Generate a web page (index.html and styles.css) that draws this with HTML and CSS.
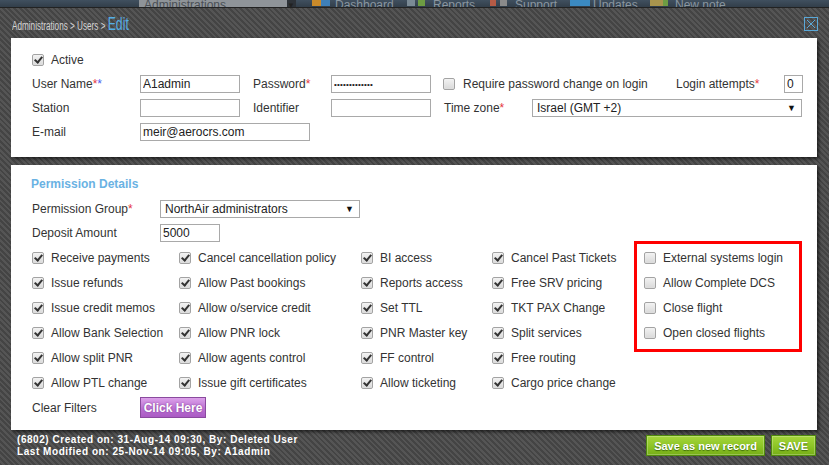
FILE: index.html
```html
<!DOCTYPE html>
<html lang="en">
<head>
  <meta charset="UTF-8" />
  <title>Users - Edit</title>
  <link rel="stylesheet" href="styles.css">
</head>
<body>

  <div class="topbar">
    <div class="top-select">Administrations<span>&#9660;</span></div>
    <span class="top-ico ico-dash"></span><span class="top-link l-dash">Dashboard</span>
    <span class="top-ico ico-rep"></span><span class="top-link l-rep">Reports</span>
    <span class="top-ico ico-sup"></span><span class="top-link l-sup">Support</span>
    <span class="top-ico ico-upd"></span><span class="top-link l-upd">Updates</span>
    <span class="top-ico ico-note"></span><span class="top-link l-note">New note</span>
  </div>

  <div class="dialog-head">
    <div class="crumbs">Administrations &gt; Users &gt; <b>Edit</b></div>
    <div class="close-btn">
      <svg width="14" height="14" viewBox="0 0 14 14">
        <rect x="0.5" y="0.5" width="13" height="13" fill="none" stroke="#5aa8d8" />
        <path d="M3 3 L11 11 M11 3 L3 11" stroke="#5aa8d8" stroke-width="1" />
      </svg>
    </div>
  </div>

  <div class="panel panel-user">
    <div class="row row-active">
      <span class="chk on"></span><span>Active</span>
    </div>
    <div class="row">
      <label class="lbl">User Name<em>*</em><em class="blue">*</em></label>
      <input class="inp w100" type="text" value="A1admin">
      <label class="lbl lbl-mid">Password<em>*</em></label>
      <input class="inp w100 pwd" type="password" value="aaaaaaaaaaaaa">
      <span class="chk"></span><span class="lbl-req">Require password change on login</span>
      <label class="lbl">Login attempts<em>*</em></label>
      <input class="inp w19" type="text" value="0">
    </div>
    <div class="row">
      <label class="lbl">Station</label>
      <input class="inp w100" type="text">
      <label class="lbl lbl-mid">Identifier</label>
      <input class="inp w100" type="text">
      <label class="lbl lbl-tz">Time zone<em>*</em></label>
      <div class="sel w270">Israel (GMT +2)</div>
    </div>
    <div class="row">
      <label class="lbl">E-mail</label>
      <input class="inp w170" type="text" value="meir@aerocrs.com">
    </div>
  </div>

  <div class="panel panel-perm">
    <div class="perm-title">Permission Details</div>
    <div class="row">
      <label class="lbl lbl-wide">Permission Group<em>*</em></label>
      <div class="sel w200">NorthAir administrators</div>
    </div>
    <div class="row">
      <label class="lbl lbl-wide">Deposit Amount</label>
      <input class="inp w60" type="text" value="5000">
    </div>

    <div class="perm-grid">
      <div class="perm"><span class="chk on"></span>Receive payments</div>
      <div class="perm"><span class="chk on"></span>Cancel cancellation policy</div>
      <div class="perm"><span class="chk on"></span>BI access</div>
      <div class="perm"><span class="chk on"></span>Cancel Past Tickets</div>
      <div class="perm"><span class="chk"></span>External systems login</div>

      <div class="perm"><span class="chk on"></span>Issue refunds</div>
      <div class="perm"><span class="chk on"></span>Allow Past bookings</div>
      <div class="perm"><span class="chk on"></span>Reports access</div>
      <div class="perm"><span class="chk on"></span>Free SRV pricing</div>
      <div class="perm"><span class="chk"></span>Allow Complete DCS</div>

      <div class="perm"><span class="chk on"></span>Issue credit memos</div>
      <div class="perm"><span class="chk on"></span>Allow o/service credit</div>
      <div class="perm"><span class="chk on"></span>Set TTL</div>
      <div class="perm"><span class="chk on"></span>TKT PAX Change</div>
      <div class="perm"><span class="chk"></span>Close flight</div>

      <div class="perm"><span class="chk on"></span>Allow Bank Selection</div>
      <div class="perm"><span class="chk on"></span>Allow PNR lock</div>
      <div class="perm"><span class="chk on"></span>PNR Master key</div>
      <div class="perm"><span class="chk on"></span>Split services</div>
      <div class="perm"><span class="chk"></span>Open closed flights</div>

      <div class="perm"><span class="chk on"></span>Allow split PNR</div>
      <div class="perm"><span class="chk on"></span>Allow agents control</div>
      <div class="perm"><span class="chk on"></span>FF control</div>
      <div class="perm"><span class="chk on"></span>Free routing</div>
      <div class="perm"></div>

      <div class="perm"><span class="chk on"></span>Allow PTL change</div>
      <div class="perm"><span class="chk on"></span>Issue gift certificates</div>
      <div class="perm"><span class="chk on"></span>Allow ticketing</div>
      <div class="perm"><span class="chk on"></span>Cargo price change</div>
      <div class="perm"></div>

      <div class="mark-box"></div>
    </div>

    <div class="row row-clear">
      <label class="lbl">Clear Filters</label>
      <button class="btn-purple" type="button">Click Here</button>
    </div>
  </div>

  <div class="dialog-foot">
    <div class="foot-info">
      <div>(6802) Created on: 31-Aug-14 09:30, By: Deleted User</div>
      <div>Last Modified on: 25-Nov-14 09:05, By: A1admin</div>
    </div>
    <div class="foot-btns">
      <button class="btn-green" type="button">Save as new record</button>
      <button class="btn-green" type="button">SAVE</button>
    </div>
  </div>

</body>
</html>
```

FILE: styles.css
```css
body {
  margin: 0;
  font-family: 'Liberation Sans', Arial, sans-serif;
  font-size: 12px;
  color: #333;
  background: repeating-linear-gradient(45deg, #444 0, #444 2px, #555 2px, #555 4px);
  height: 465px;
  overflow: hidden;
}

/* dimmed toolbar behind the dialog */
.topbar {
  height: 7px;
  overflow: hidden;
  display: flex;
  align-items: flex-start;
  background: linear-gradient(#40505f, #323e4a);
  border-bottom: 1px solid #222;
  color: #8a96a0;
  font-size: 12px;
  line-height: 11px;
  white-space: nowrap;
}

.top-select {
  box-sizing: border-box;
  width: 157px;
  margin-left: 139px;
  height: 7px;
  background: #8f9499;
  color: #4a4f55;
  padding-left: 5px;
  display: flex;
  justify-content: space-between;
}

.top-select span {
  background: #2d3238;
  color: #222;
  font-size: 8px;
  width: 9px;
}

.top-ico {
  flex: none;
  height: 6px;
}

.top-link {
  flex: none;
}

.ico-dash { width: 18px; margin-left: 16px; background: linear-gradient(90deg, #c98a2a 50%, #3e7fb8 50%); }
.ico-rep { width: 18px; background: linear-gradient(90deg, #7a8a95 45%, transparent 45%, transparent 60%, #6d9c43 60%); }
.ico-sup { width: 17px; background: linear-gradient(90deg, #b55b46 35%, transparent 35%, transparent 60%, #8a8a8a 60%); }
.ico-upd { width: 20px; background: #3b8ac2; }
.ico-note { width: 18px; background: linear-gradient(90deg, #a8944d 70%, #6d9c43 70%); }

.l-dash { width: 72px; margin-left: 5px; }
.l-rep { width: 57px; margin-left: 8px; }
.l-sup { width: 55px; margin-left: 8px; }
.l-upd { width: 57px; margin-left: 3px; }
.l-note { margin-left: 7px; }

.dialog-head {
  height: 30px;
  display: flex;
  align-items: center;
  justify-content: space-between;
  padding: 0 11px 0 12px;
}

.crumbs {
  color: #d4d4d4;
  font-size: 12px;
  transform: scaleX(0.68);
  transform-origin: left center;
  white-space: nowrap;
  margin-top: 2px;
}

.crumbs b {
  color: #55aee6;
  font-weight: normal;
  font-size: 18px;
}

.close-btn {
  height: 14px;
  margin-top: 2px;
}

.panel {
  background: #fff;
  margin: 0 12px 0 11px;
  padding: 0 20px 0 21px;
  box-shadow: 2px 2px 3px rgba(0,0,0,0.55);
}

.panel-user {
  padding-top: 9px;
  padding-bottom: 13px;
}

.panel-perm {
  margin-top: 8px;
  padding-top: 9px;
  padding-bottom: 10px;
}

.row {
  display: flex;
  align-items: center;
  height: 24px;
  white-space: nowrap;
}

.row-active {
  height: 25px;
}

.lbl {
  width: 108px;
  flex: none;
}

.lbl-mid {
  width: 78px;
  margin-left: 13px;
}

.lbl-tz {
  width: 88px;
  margin-left: 13px;
}

.lbl-wide {
  width: 128px;
}

.lbl-req {
  width: 213px;
  flex: none;
}

em {
  font-style: normal;
  color: #e5353d;
}

em.blue {
  color: #4a5ef0;
}

.inp {
  box-sizing: border-box;
  height: 18px;
  border: 1px solid #a9a9a9;
  padding: 0 2px;
  font-family: 'Liberation Sans', Arial, sans-serif;
  font-size: 12px;
  color: #222;
  flex: none;
  outline: none;
}

.pwd {
  font-size: 8px;
  letter-spacing: 0.2px;
}

.w19 { width: 19px; }
.w60 { width: 60px; }
.w100 { width: 100px; }
.w170 { width: 170px; }
.w200 { width: 200px; }
.w270 { width: 270px; }

.sel {
  box-sizing: border-box;
  height: 18px;
  line-height: 16px;
  border: 1px solid #a9a9a9;
  padding: 0 4px;
  color: #222;
  position: relative;
  flex: none;
}

.sel::after {
  content: "\25BC";
  position: absolute;
  right: 5px;
  top: 0;
  font-size: 9px;
  color: #111;
}

.chk {
  box-sizing: border-box;
  width: 12px;
  height: 12px;
  border: 1px solid #a3a3a3;
  border-radius: 2px;
  background: linear-gradient(#f2f2f2, #d9d9d9);
  box-shadow: inset 0 0 1px #fff;
  margin-right: 7px;
  flex: none;
  position: relative;
}

.chk.on::after {
  content: "";
  position: absolute;
  left: 3px;
  top: 0px;
  width: 3px;
  height: 6px;
  border: solid #333;
  border-width: 0 2px 2px 0;
  transform: rotate(40deg);
}

.panel-user .row .chk {
  margin-left: 12px;
  margin-right: 8px;
}

.panel-user .row-active .chk {
  margin-left: 0;
  margin-right: 7px;
}

.perm-title {
  height: 20px;
  line-height: 20px;
  color: #6ab2e3;
  font-weight: bold;
  margin-left: -1px;
  margin-bottom: 3px;
}

.perm-grid {
  display: grid;
  grid-template-columns: 147px 182px 131px 152px 1fr;
  grid-auto-rows: 25px;
  position: relative;
}

.perm {
  display: flex;
  align-items: center;
  white-space: nowrap;
}

/* red annotation frame over the last column */
.mark-box {
  position: absolute;
  left: 602px;
  top: -4px;
  width: 162px;
  height: 105px;
  border: 3px solid #f00;
}

.row-clear {
  height: 25px;
}

.btn-purple {
  width: 66px;
  height: 21px;
  padding: 0;
  border: 1px solid #8a4a9e;
  background: linear-gradient(#dca0ea, #b96fd0 60%, #aa5ac4);
  color: #fff;
  font-family: 'Liberation Sans', Arial, sans-serif;
  font-size: 12px;
  font-weight: bold;
  text-shadow: 0 0 2px #7a3590;
}

.dialog-foot {
  display: flex;
  justify-content: space-between;
  align-items: flex-start;
  padding: 4px 13px 0 17px;
}

.foot-info {
  color: #fff;
  font-size: 10px;
  font-weight: bold;
  letter-spacing: 0.55px;
  line-height: 12px;
}

.foot-btns {
  display: flex;
  gap: 6px;
  margin-top: 1px;
}

.btn-green {
  height: 21px;
  padding: 0 7px;
  border: 1px solid #4f8a0c;
  background: linear-gradient(#a6d63c, #8cc425 55%, #76ae18);
  box-shadow: inset 0 0 0 1px rgba(255,255,255,0.25);
  color: #fff;
  font-family: 'Liberation Sans', Arial, sans-serif;
  font-size: 11px;
  font-weight: bold;
  text-shadow: 0 1px 1px #3d6b08;
}
```
